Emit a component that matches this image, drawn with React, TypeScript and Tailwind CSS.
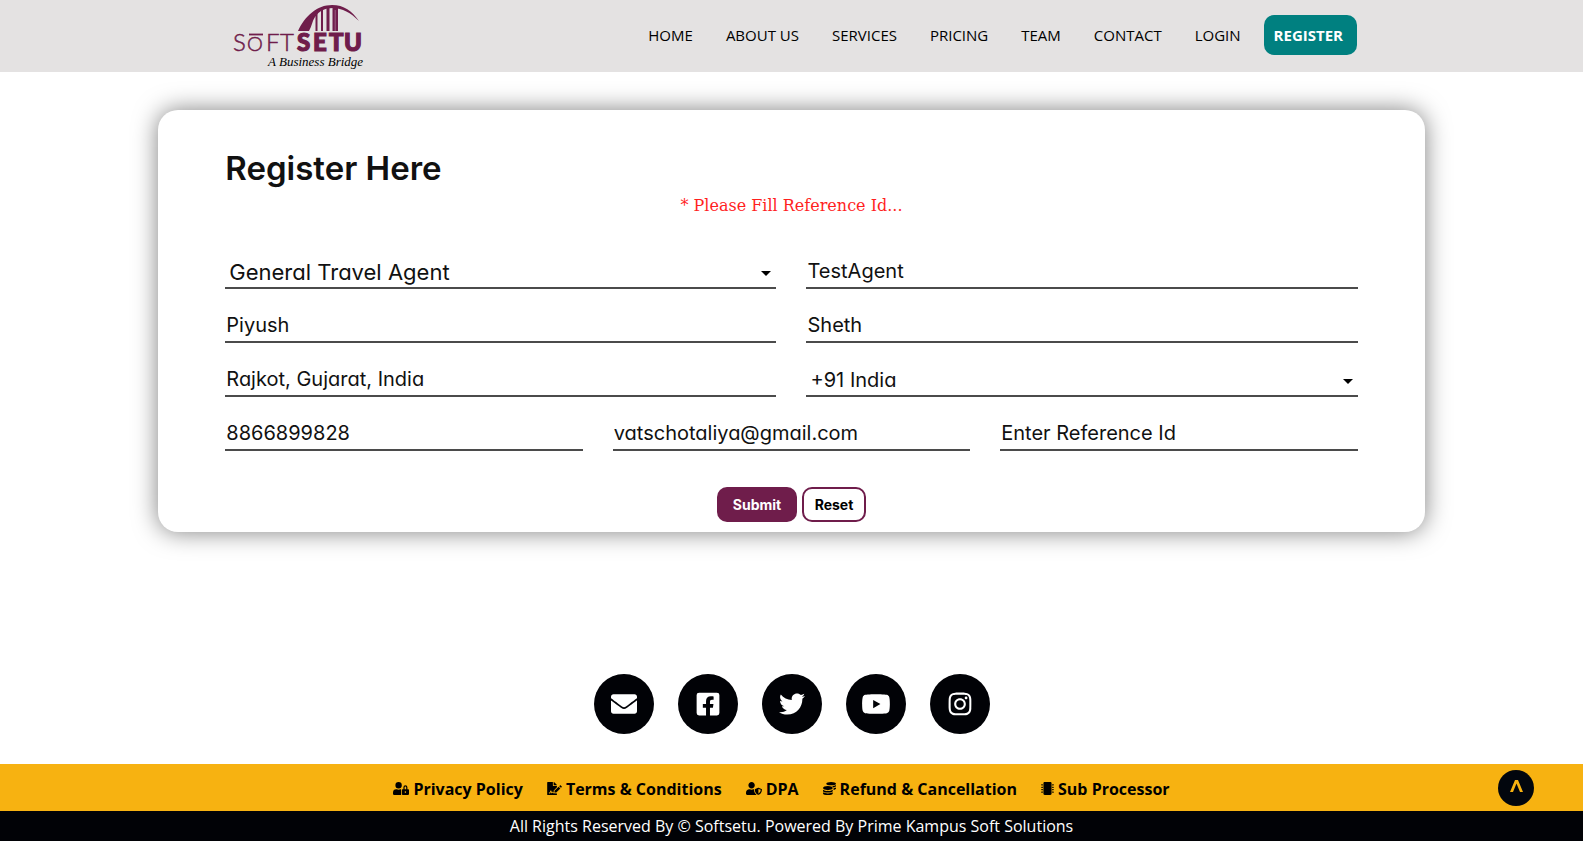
import { useState } from "react";
import type { ReactNode } from "react";
import {
  FaEnvelope,
  FaFacebookSquare,
  FaTwitter,
  FaYoutube,
  FaInstagram,
  FaUserLock,
  FaFileSignature,
  FaUserShield,
  FaCoins,
  FaMicrochip,
} from "react-icons/fa";

const fieldClass =
  "block h-8 w-full rounded-none border-b-2 border-[#4b4b4b] bg-transparent pb-0.5 pl-px text-xl leading-7 text-[#111] outline-none placeholder:text-[#111]";

function Logo() {
  return (
    <svg viewBox="0 0 160 72" className="h-18 w-40" role="img" aria-label="Softsetu, A Business Bridge">
      <g fill="#6f1d4b">
        <path d="M78 31 C85 16 97 5 112 5 C124 5 132 11 139 21 C131 13 122 8 113 8 C105 8 99 11 95 17 C92 21 92 26 89 31 Z" />
        <path d="M95.500 13 H97.500 V31 H95.500 Z M101 10 H103 V31 H101 Z M106.500 7 H109.500 V31 H106.500 Z M112.500 7 H118 V31 H112.500 Z" />
      </g>
      <path d="M115.200 10 V31" stroke="#b98fa8" strokeWidth="0.600" />
      <g fill="#6f1d4b" stroke="#6f1d4b" fontFamily="Lato, sans-serif" fontSize="24">
        <g fontWeight="300" strokeWidth="0.500">
          <text x="13" y="51">S</text>
          <text x="46" y="51">F</text>
          <text x="60" y="51">T</text>
          <text x="27" y="51" fontSize="20">O</text>
        </g>
        <g fontWeight="900" strokeWidth="1.200">
          <text x="77" y="51">S</text>
          <text x="93" y="51">E</text>
          <text x="109" y="51">T</text>
          <text x="124" y="51">U</text>
        </g>
      </g>
      <path d="M29 34.500 H43" stroke="#6f1d4b" strokeWidth="1.800" />
      <text x="48" y="66" fontFamily="Liberation Serif, serif" fontSize="13" fontStyle="italic" fill="#000">
        A Business Bridge
      </text>
    </svg>
  );
}

function SelectField({ label, value, className }: { label: string; value: string; className: string }) {
  return (
    <div className="relative">
      <select
        aria-label={label}
        className={`block h-8 w-full appearance-none rounded-none border-b-2 border-[#4b4b4b] bg-transparent pl-1 leading-7 text-[#111] outline-none ${className}`}
      >
        <option>{value}</option>
      </select>
      <svg
        viewBox="0 0 10 6"
        className="pointer-events-none absolute top-3.5 right-[5px] h-1.5 w-2.5"
        aria-hidden="true"
      >
        <path d="M0 0 H10 L5 5 Z" fill="#000" />
      </svg>
    </div>
  );
}

function TextField({ label, initial = "", type = "text", placeholder }: {
  label: string;
  initial?: string;
  type?: string;
  placeholder?: string;
}) {
  const [value, setValue] = useState(initial);
  return (
    <input
      aria-label={label}
      type={type}
      value={value}
      placeholder={placeholder}
      onChange={(e) => setValue(e.target.value)}
      className={fieldClass}
    />
  );
}

const navItems = ["HOME", "ABOUT US", "SERVICES", "PRICING", "TEAM", "CONTACT", "LOGIN"];

const socials: { name: string; icon: ReactNode }[] = [
  { name: "Email", icon: <FaEnvelope /> },
  { name: "Facebook", icon: <FaFacebookSquare /> },
  { name: "Twitter", icon: <FaTwitter /> },
  { name: "YouTube", icon: <FaYoutube className="w-[30px]" /> },
  { name: "Instagram", icon: <FaInstagram /> },
];

const policies: { name: string; icon: ReactNode }[] = [
  { name: "Privacy Policy", icon: <FaUserLock className="w-4" /> },
  { name: "Terms & Conditions", icon: <FaFileSignature className="w-[15px]" /> },
  { name: "DPA", icon: <FaUserShield className="w-4" /> },
  { name: "Refund & Cancellation", icon: <FaCoins /> },
  { name: "Sub Processor", icon: <FaMicrochip /> },
];

export default function App() {
  return (
    <div className="flex min-h-screen flex-col bg-white font-['Open_Sans',sans-serif] text-black">
      <header className="bg-[#e4e2e2]">
        <div className="mx-auto flex h-18 max-w-[1143px] items-center justify-between">
          <a href="#home">
            <Logo />
          </a>
          <nav className="mr-1.5 mb-0.5 flex items-center text-[15px]">
            <div className="mr-[23px] flex gap-[33px]">
              {navItems.map((item) => (
                <a key={item} href="#top">
                  {item}
                </a>
              ))}
            </div>
            <a
              href="#register"
              className="flex h-10 items-center rounded-[10px] bg-[#008080] pr-3.5 pl-2.5 font-bold text-white"
            >
              REGISTER
            </a>
          </nav>
        </div>
      </header>

      <main className="flex flex-1 flex-col justify-between">
        <form
          onSubmit={(e) => e.preventDefault()}
          className="mx-auto mt-[38px] w-4/5 rounded-[20px] bg-white px-[67px] pt-8 pb-2.5 font-['Inter',sans-serif] shadow-[0_0_24px_rgba(0,0,0,0.5)] [font-feature-settings:'cv11']"
        >
          <h1 className="text-[33px] leading-[52px] font-semibold text-[#111]">Register Here</h1>
          <p className="text-center font-['DejaVu_Serif',serif] text-base leading-6 text-[#ff1f1f]">
            * Please Fill Reference Id...
          </p>
          <div className="mt-[39px] grid grid-cols-2 gap-x-[30px] gap-y-[22px]">
            <SelectField label="Agent type" value="General Travel Agent" className="text-[22px]" />
            <TextField label="Agency name" initial="TestAgent" />
            <TextField label="First name" initial="Piyush" />
            <TextField label="Last name" initial="Sheth" />
            <TextField label="City" initial="Rajkot, Gujarat, India" />
            <SelectField label="Country code" value="+91 India" className="text-xl" />
          </div>
          <div className="mt-[22px] grid grid-cols-3 gap-x-[30px]">
            <TextField label="Phone" type="tel" initial="8866899828" />
            <TextField label="Email address" type="email" initial="vatschotaliya@gmail.com" />
            <TextField label="Reference Id" placeholder="Enter Reference Id" />
          </div>
          <div className="mt-9 flex justify-center gap-[5px] text-sm font-bold">
            <button type="submit" className="h-[35px] w-20 rounded-[10px] bg-[#6f1d4b] text-white">
              Submit
            </button>
            <button
              type="reset"
              className="h-[35px] w-16 rounded-[10px] border-2 border-[#6f1d4b] bg-white text-black"
            >
              Reset
            </button>
          </div>
        </form>

        <div className="mb-[30px] flex justify-center gap-6">
          {socials.map((s) => (
            <a
              key={s.name}
              href="#social"
              aria-label={s.name}
              className="flex size-[60px] items-center justify-center rounded-full bg-[#010206] text-[26px] text-white"
            >
              {s.icon}
            </a>
          ))}
        </div>
      </main>

      <footer>
        <div className="relative flex h-[47px] items-center justify-center bg-[#f7b211] pt-0.5 font-bold">
          <ul className="mr-5 flex gap-6">
            {policies.map((p) => (
              <li key={p.name}>
                <a href="#policy" className="flex items-center gap-1">
                  <span className="text-[13px]">{p.icon}</span>
                  {p.name}
                </a>
              </li>
            ))}
          </ul>
          <button
            type="button"
            aria-label="Back to top"
            className="absolute top-1.5 right-[49px] flex size-9 items-center justify-center rounded-full bg-[#02060d] text-[#f7b211]"
          >
            <svg viewBox="0 0 13 12" className="mb-1 h-3 w-[13px]" aria-hidden="true">
              <path d="M0 12 L5 0 H8 L13 12 H10 L6.500 3.500 L3 12 Z" fill="currentColor" />
            </svg>
          </button>
        </div>
        <p className="h-[30px] bg-[#010206] text-center leading-[30px] text-white">
          All Rights Reserved By © Softsetu. Powered By Prime Kampus Soft Solutions
        </p>
      </footer>
    </div>
  );
}
